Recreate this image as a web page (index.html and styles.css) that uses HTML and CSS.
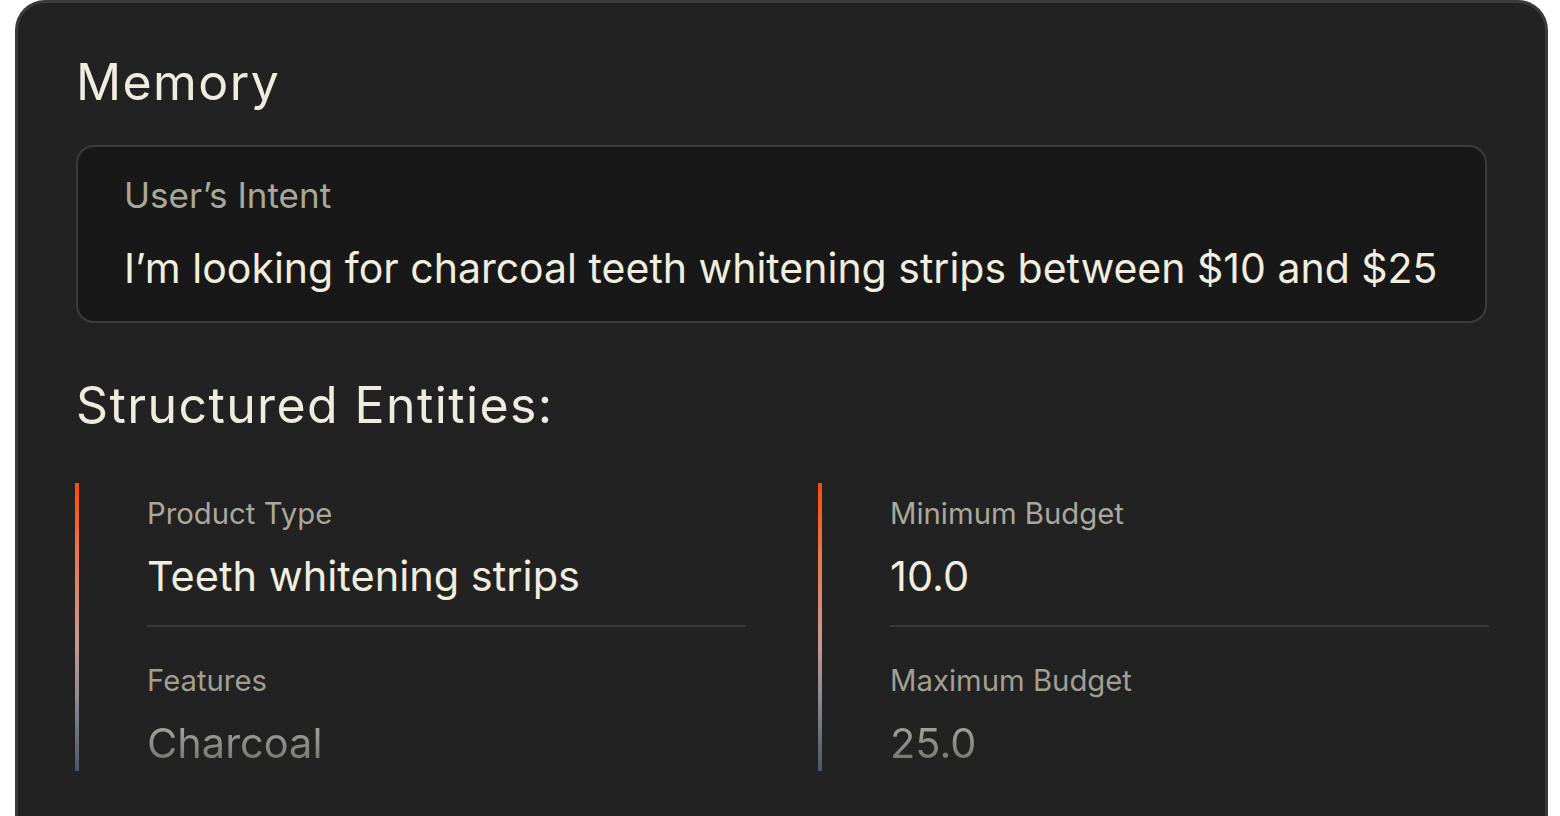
FILE: index.html
```html
<!DOCTYPE html>
<html lang="en">
<head>
<meta charset="utf-8">
<title>Memory</title>
<link rel="stylesheet" href="styles.css">
</head>
<body>
<section class="card">
  <h1 class="title">Memory</h1>
  <div class="intent">
    <div class="intent-label">User’s Intent</div>
    <div class="intent-value">I’m looking for charcoal teeth whitening strips between $10 and $25</div>
  </div>
  <h2 class="title section-title">Structured Entities:</h2>
  <div class="entities">
    <div class="col">
      <div class="bar"></div>
      <div class="fields">
        <div class="field first">
          <div class="label">Product Type</div>
          <div class="value">Teeth whitening strips</div>
        </div>
        <div class="field second">
          <div class="label dim">Features</div>
          <div class="value faded">Charcoal</div>
        </div>
      </div>
    </div>
    <div class="col">
      <div class="bar"></div>
      <div class="fields">
        <div class="field first">
          <div class="label">Minimum Budget</div>
          <div class="value">10.0</div>
        </div>
        <div class="field second">
          <div class="label dim">Maximum Budget</div>
          <div class="value faded">25.0</div>
        </div>
      </div>
    </div>
  </div>
</section>
</body>
</html>
```

FILE: styles.css
```css
html, body {
  margin: 0;
  padding: 0;
  background: #ffffff;
  overflow: hidden;
  height: 816px;
}
body {
  font-family: Inter, "Noto Sans", sans-serif;
  padding-left: 15px;
}
.card {
  box-sizing: border-box;
  width: 1533px;
  height: 816px;
  background: #222222;
  border: 3px solid #3b3b3b;
  border-bottom: none;
  border-radius: 30px 30px 0 0;
  padding: 49px 58px 0 58px;
}
.title {
  margin: 0;
  font-size: 50px;
  line-height: 60px;
  font-weight: 400;
  color: #efecdf;
  letter-spacing: 1.4px;
}
.intent {
  margin-top: 33px;
  box-sizing: border-box;
  height: 178px;
  border: 2px solid #3c3c3c;
  border-radius: 18px;
  background: #181818;
  padding: 27px 46px 0 46px;
}
.intent-label {
  font-size: 35px;
  line-height: 42px;
  color: #a9a79c;
}
.intent-value {
  margin-top: 27px;
  font-size: 41px;
  line-height: 50px;
  color: #f0eedf;
  white-space: nowrap;
}
.section-title {
  margin-top: 52px;
}
.entities {
  margin-top: 48px;
  margin-left: -1px;
  display: grid;
  grid-template-columns: 671px 671px;
  column-gap: 72px;
}
.col {
  display: flex;
  height: 288px;
}
.bar {
  width: 4px;
  flex: none;
  background: linear-gradient(to bottom, #ff4a08 0%, #e9774f 25%, #c99892 55%, #8d8a93 75%, #4a5868 100%);
}
.fields {
  margin-left: 68px;
  flex: 1;
}
.field.first {
  padding: 13px 0 24px;
  border-bottom: 2px solid #393939;
}
.field.second {
  padding-top: 36px;
}
.label {
  font-size: 29.3px;
  line-height: 36px;
  color: #aaa89d;
}
.label.dim {
  color: #a19f94;
}
.value {
  margin-top: 19px;
  font-size: 41.5px;
  line-height: 50px;
  color: #f0eedf;
}
.value.faded {
  background: linear-gradient(to bottom, #a2a198 20%, #74746d 90%);
  -webkit-background-clip: text;
  background-clip: text;
  color: transparent;
}
```
